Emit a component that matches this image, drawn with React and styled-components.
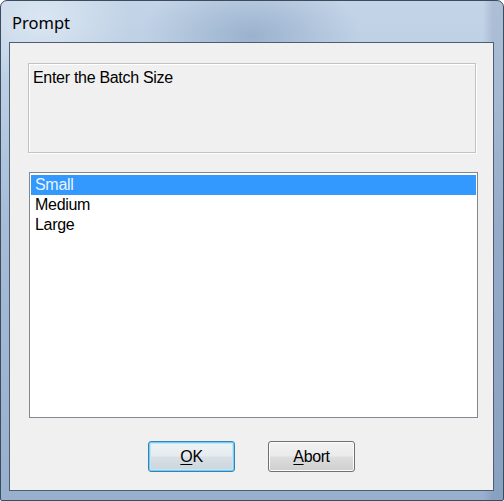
import React, { useState } from 'react';
import styled, { createGlobalStyle } from 'styled-components';

const GlobalStyle = createGlobalStyle`
  html, body {
    margin: 0;
    padding: 0;
    background: #ffffff;
  }
`;

const ITEMS = ['Small', 'Medium', 'Large'];

const Window = styled.div`
  box-sizing: border-box;
  width: 504px;
  height: 501px;
  display: flex;
  flex-direction: column;
  border: 1px solid #3d4b5e;
  border-radius: 7px 7px 2px 2px;
  background:
    radial-gradient(ellipse 90px 70px at 40px 20px, rgba(235, 243, 250, 0.6), transparent),
    radial-gradient(ellipse 110px 60px at 250px 35px, rgba(110, 140, 178, 0.45), transparent),
    linear-gradient(90deg, rgba(0, 0, 0, 0) 96%, rgba(70, 95, 135, 0.18) 98%),
    linear-gradient(180deg, #c3d4e7 0%, #b9cce2 20%, #a6bcd7 45%, #98b0cd 100%);
  overflow: hidden;
`;

const TitleBar = styled.div`
  height: 41px;
  flex: none;
  display: flex;
  align-items: center;
  padding-left: 11px;
  padding-top: 2px;
  box-sizing: border-box;
  font-family: 'Noto Sans', 'Open Sans', sans-serif;
  font-size: 16.5px;
  color: #000;
`;

const Client = styled.div`
  box-sizing: border-box;
  width: 485px;
  height: 449px;
  margin-left: 8px;
  border: 1px solid #4e5e72;
  background: #f0f0f0;
  display: flex;
  flex-direction: column;
  padding-top: 20px;
  font-family: 'Liberation Sans', Arial, sans-serif;
  font-size: 16px;
  color: #000;
`;

const MessageBox = styled.div`
  box-sizing: border-box;
  width: 448px;
  height: 90px;
  margin-left: 18px;
  border: 1px solid #c2c2c2;
  box-shadow: inset 1px 1px 0 #ffffff, 1px 1px 0 #ffffff;
  padding: 5px 4px;
  letter-spacing: -0.3px;
`;

const ListBox = styled.ul`
  box-sizing: border-box;
  list-style: none;
  margin: 19px 0 0 19px;
  padding: 2px 1px;
  width: 449px;
  height: 246px;
  border: 1px solid #828790;
  background: #ffffff;
`;

const ListItem = styled.li`
  height: 20px;
  line-height: 20px;
  padding-left: 4px;
  background: ${p => (p.$selected ? '#3399ff' : 'transparent')};
  color: ${p => (p.$selected ? '#eaf4ff' : '#000')};
  cursor: default;
  letter-spacing: -0.3px;
`;

const ButtonRow = styled.div`
  display: flex;
  gap: 33px;
  margin: 23px 0 0 138px;
`;

const Button = styled.button`
  box-sizing: border-box;
  width: 87px;
  height: 31px;
  border-radius: 3px;
  font-family: 'Liberation Sans', Arial, sans-serif;
  font-size: 16px;
  color: #000;
  padding: 0;
  letter-spacing: -0.4px;
  border: 1px solid ${p => (p.$default ? '#3c7fb1' : '#707070')};
  background: ${p =>
    p.$default
      ? 'linear-gradient(180deg, #eef3f6 0%, #e6ebef 48%, #d8dfe5 52%, #ccd5dc 100%)'
      : 'linear-gradient(180deg, #f2f2f2 0%, #ebebeb 48%, #dddddd 52%, #cfcfcf 100%)'};
  box-shadow: ${p =>
    p.$default ? 'inset 0 0 0 1px #6fcff5, inset 0 0 0 2px #c2e8f8' : 'inset 0 0 0 1px #fcfcfc'};
  cursor: default;

  u {
    text-decoration-thickness: 1px;
    text-underline-offset: 2px;
  }
`;

export default function App() {
  const [selected, setSelected] = useState(0);

  return (
    <>
      <GlobalStyle />
      <Window>
        <TitleBar>Prompt</TitleBar>
        <Client>
          <MessageBox>Enter the Batch Size</MessageBox>
          <ListBox>
            {ITEMS.map((item, i) => (
              <ListItem key={item} $selected={i === selected} onClick={() => setSelected(i)}>
                {item}
              </ListItem>
            ))}
          </ListBox>
          <ButtonRow>
            <Button $default>
              <u>O</u>K
            </Button>
            <Button>
              <u>A</u>bort
            </Button>
          </ButtonRow>
        </Client>
      </Window>
    </>
  );
}
